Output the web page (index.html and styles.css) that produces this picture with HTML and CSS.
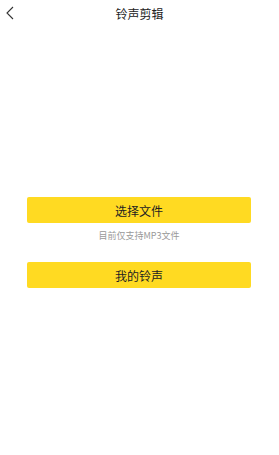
FILE: index.html
```html
<!DOCTYPE html>
<html lang="zh-CN">
<head>
  <meta charset="UTF-8">
  <meta name="viewport" content="width=device-width, initial-scale=1.0">
  <title>铃声剪辑</title>
  <link rel="stylesheet" href="styles.css">
</head>
<body>
  <!-- 顶部导航栏 -->
  <div class="navbar">
    <a class="nav-back" href="javascript:;">
      <svg width="8" height="14" viewBox="0 0 8 14">
        <path d="M7 1 L1 7 L7 13" fill="none" stroke="#333" stroke-width="1.1"/>
      </svg>
    </a>
    <div class="nav-title">铃声剪辑</div>
  </div>

  <div class="content">
    <a class="yellow-btn" href="javascript:;">选择文件</a>
    <div class="tip">目前仅支持MP3文件</div>
    <a class="yellow-btn" href="javascript:;">我的铃声</a>
  </div>
</body>
</html>
```

FILE: styles.css
```css
body {
  font-family: "Noto Sans CJK SC", "Noto Sans", sans-serif;
  background: #fff;
  margin: 0;
  color: #222;
}
.navbar {
  position: relative;
  height: 27px;
  display: flex;
  align-items: center;
  justify-content: center;
}
.nav-back {
  position: absolute;
  left: 6px;
  top: 6px;
  display: flex;
}
.nav-title {
  font-size: 12px;
  color: #222;
}
.content {
  padding: 170px 28px 0 27px;
  display: flex;
  flex-direction: column;
}
.yellow-btn {
  display: flex;
  align-items: center;
  justify-content: center;
  height: 26px;
  background: #ffda22;
  border-radius: 2px;
  font-size: 12px;
  color: #222;
  text-decoration: none;
}
.tip {
  font-size: 9px;
  color: #999;
  text-align: center;
  margin: 6px 0 20px 0;
  line-height: 13px;
}
```
